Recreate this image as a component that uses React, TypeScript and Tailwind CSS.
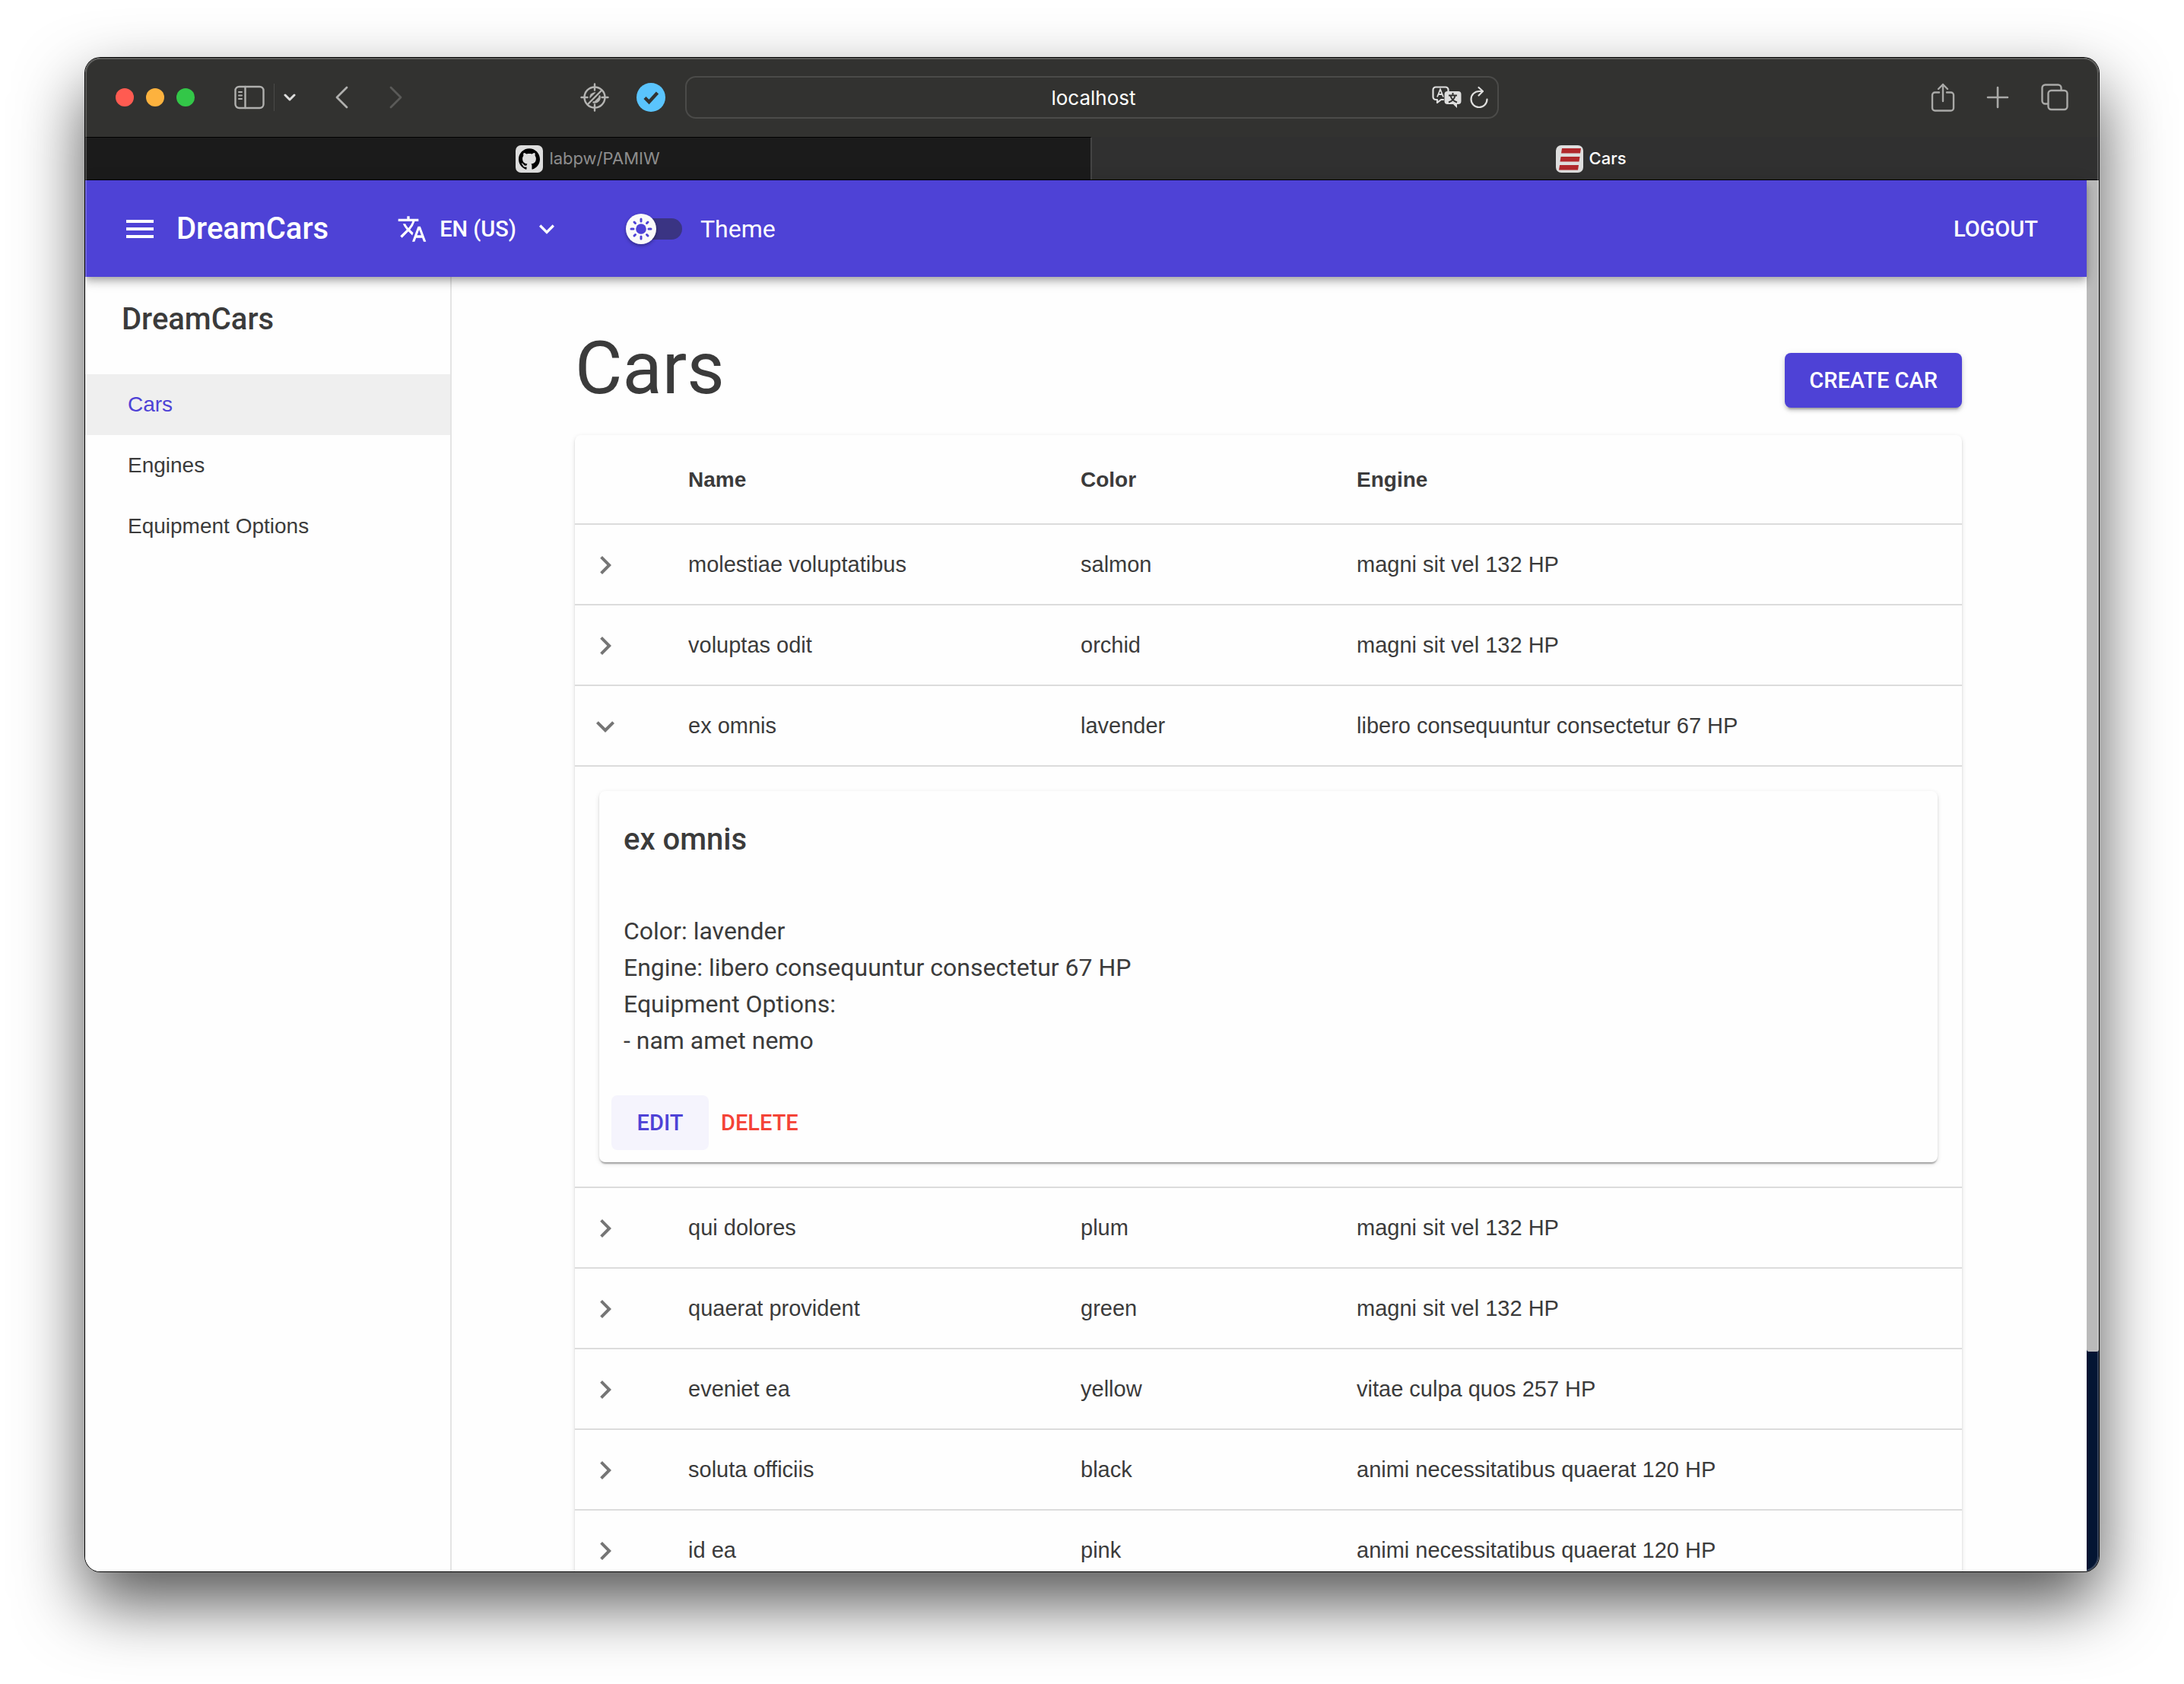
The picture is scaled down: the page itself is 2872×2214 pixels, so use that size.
import React, { useState } from "react";
import {
  MdChevronRight,
  MdExpandMore,
  MdMenu,
  MdTranslate,
} from "react-icons/md";
import { SiGithub } from "react-icons/si";

type Car = {
  name: string;
  color: string;
  engine: string;
  options: string[];
};

const cars: Car[] = [
  { name: "molestiae voluptatibus", color: "salmon", engine: "magni sit vel 132 HP", options: [] },
  { name: "voluptas odit", color: "orchid", engine: "magni sit vel 132 HP", options: [] },
  { name: "ex omnis", color: "lavender", engine: "libero consequuntur consectetur 67 HP", options: ["nam amet nemo"] },
  { name: "qui dolores", color: "plum", engine: "magni sit vel 132 HP", options: [] },
  { name: "quaerat provident", color: "green", engine: "magni sit vel 132 HP", options: [] },
  { name: "eveniet ea", color: "yellow", engine: "vitae culpa quos 257 HP", options: [] },
  { name: "soluta officiis", color: "black", engine: "animi necessitatibus quaerat 120 HP", options: [] },
  { name: "id ea", color: "pink", engine: "animi necessitatibus quaerat 120 HP", options: [] },
];

function SidebarIcon() {
  return (
    <svg width="40" height="32" viewBox="0 0 40 32" fill="none" stroke="#b0b0ae" strokeWidth="2.4" strokeLinecap="round">
      <rect x="1.5" y="2" width="37" height="28" rx="5" />
      <path d="M14.5 2v28" />
      <path d="M6 9h4M6 13.5h4M6 18h4" strokeWidth="2" />
    </svg>
  );
}

function CrosshairIcon() {
  return (
    <svg width="38" height="38" viewBox="0 0 38 38" fill="none" stroke="#b4b4b2" strokeWidth="2.4" strokeLinecap="round">
      <circle cx="19" cy="19" r="13.5" />
      <path d="M19 1.5v8M19 28.5v8M1.5 19h8M28.5 19h8" />
      <path d="M10 28L28 10" />
      <path d="M12.5 20.5a6.8 6.8 0 0 1 8-8z" fill="#b4b4b2" stroke="none" />
      <path d="M17.5 25.5L25.5 17.5a6.8 6.8 0 0 1-8 8z" fill="#b4b4b2" stroke="none" />
      <path d="M17.5 25.5a6.8 6.8 0 0 0 8-8" />
    </svg>
  );
}

function CheckBadgeIcon() {
  return (
    <svg width="38" height="38" viewBox="0 0 38 38" fill="none">
      <circle cx="19" cy="19" r="19" fill="#5ac4fd" />
      <path d="M11 19.5l5.5 5.5L27.5 13" stroke="#323230" strokeWidth="4.4" />
    </svg>
  );
}

function PageTranslateIcon() {
  return (
    <svg width="40" height="30" viewBox="0 0 40 30" fill="none">
      <path
        d="M15 18h-3l-5 4v-4H5a3.5 3.5 0 0 1-3.5-3.5V5A3.5 3.5 0 0 1 5 1.5h13A3.5 3.5 0 0 1 21.5 5v2"
        stroke="#dededd"
        strokeWidth="2.2"
        strokeLinejoin="round"
        strokeLinecap="round"
      />
      <path d="M7 14.5L11 4.5l4 10M8.5 11h5" stroke="#dededd" strokeWidth="1.8" />
      <path d="M20.5 7H34.5a4 4 0 0 1 4 4v9a4 4 0 0 1-4 4H33v5l-5-5h-7.5a4 4 0 0 1-4-4v-9a4 4 0 0 1 4-4z" fill="#dededd" />
      <path
        d="M27.5 9v3M22 12.5h11M24.5 13c1 4 4 7 8.5 8.5M30.5 13c-1 4-4 7-8.5 8.5"
        stroke="#323230"
        strokeWidth="1.9"
      />
    </svg>
  );
}

function ReloadIcon() {
  return (
    <svg width="24" height="30" viewBox="0 0 24 30" fill="none" stroke="#dededd" strokeWidth="2.2" strokeLinecap="round" strokeLinejoin="round">
      <path d="M22.5 17.5A10.5 10.5 0 1 1 12 7h4.5" />
      <path d="M11.5 2l5.5 5-5.5 5.5" />
    </svg>
  );
}

function ShareIcon() {
  return (
    <svg width="32" height="38" viewBox="0 0 32 38" fill="none" stroke="#a9a9a7" strokeWidth="2.4" strokeLinecap="round" strokeLinejoin="round">
      <path d="M11 12.5H5.5A3.5 3.5 0 0 0 2 16v17a3.5 3.5 0 0 0 3.5 3.5h21A3.5 3.5 0 0 0 30 33V16a3.5 3.5 0 0 0-3.5-3.5H21" />
      <path d="M16 24V2M10 8l6-6 6 6" />
    </svg>
  );
}

function TabsIcon() {
  return (
    <svg width="36" height="36" viewBox="0 0 36 36" fill="none" stroke="#a9a9a7" strokeWidth="2.4" strokeLinejoin="round">
      <rect x="9.5" y="9" width="25" height="25" rx="4" />
      <path d="M9.5 26.5H5.5a4 4 0 0 1-4-4v-17a4 4 0 0 1 4-4h17a4 4 0 0 1 4 4V9" />
    </svg>
  );
}

function CarsFavicon() {
  return (
    <svg width="36" height="36" viewBox="0 0 36 36">
      <rect width="36" height="36" rx="7" fill="#dedede" />
      <g fill="#b0282c">
        <path d="M8 4h25l-1 6.5H7z" />
        <path d="M6.5 15h25l-1 6.5h-25z" />
        <path d="M5 26h25l-1 6.5H4z" />
      </g>
    </svg>
  );
}

function Sun() {
  return (
    <svg width="40" height="40" viewBox="0 0 40 40" fill="#4e42d6">
      <circle cx="20" cy="20" r="6.8" />
      <g stroke="#4e42d6" strokeWidth="3" strokeLinecap="round">
        <path d="M20 7v3M20 30v3M7 20h3M30 20h3M11 11l1.5 1.5M27.5 27.5L29 29M29 11l-1.5 1.5M12.5 27.5L11 29" />
      </g>
    </svg>
  );
}

function Toolbar() {
  return (
    <div className="flex h-[104px] shrink-0 items-center bg-[#323230]">
      <div className="flex flex-1 items-center pl-10">
        <div className="flex gap-4">
          <span className="size-6 rounded-full bg-[#ff5b51]" />
          <span className="size-6 rounded-full bg-[#fdb23e]" />
          <span className="size-6 rounded-full bg-[#33c748]" />
        </div>
        <div className="ml-[52px] flex items-center">
          <button aria-label="Sidebar">
            <SidebarIcon />
          </button>
          <span className="ml-3 h-9 w-px bg-[#4a4a48]" />
          <button aria-label="Tab groups" className="ml-3">
            <svg width="16" height="10" viewBox="0 0 16 10" fill="none" stroke="#dededd" strokeWidth="3" strokeLinecap="round" strokeLinejoin="round">
              <path d="M2 2l6 6 6-6" />
            </svg>
          </button>
          <button aria-label="Back" className="ml-[51px]">
            <svg width="18" height="30" viewBox="0 0 18 30" fill="none" stroke="#b0b0ae" strokeWidth="2.8" strokeLinecap="round" strokeLinejoin="round">
              <path d="M16 2L3 15l13 13" />
            </svg>
          </button>
          <button aria-label="Forward" className="ml-[54px]">
            <svg width="18" height="30" viewBox="0 0 18 30" fill="none" stroke="#5a5a58" strokeWidth="2.8" strokeLinecap="round" strokeLinejoin="round">
              <path d="M2 2l13 13L2 28" />
            </svg>
          </button>
        </div>
        <div className="ml-auto flex items-center gap-9 pr-[26px]">
          <button aria-label="Tracker blocker">
            <CrosshairIcon />
          </button>
          <button aria-label="Checker">
            <CheckBadgeIcon />
          </button>
        </div>
      </div>
      <div className="flex h-14 w-[1070px] items-center rounded-[14px] border-2 border-[#4b4b49] pr-3">
        <input
          aria-label="Address"
          defaultValue="localhost"
          className="ml-[90px] min-w-0 flex-1 bg-transparent text-center font-['Inter'] text-[26px] text-white outline-none"
        />
        <button aria-label="Translate page">
          <PageTranslateIcon />
        </button>
        <button aria-label="Reload" className="ml-2.5">
          <ReloadIcon />
        </button>
      </div>
      <div className="flex flex-1 items-center justify-end pr-10">
        <button aria-label="Share">
          <ShareIcon />
        </button>
        <button aria-label="New tab" className="ml-[41px]">
          <svg width="30" height="30" viewBox="0 0 30 30" stroke="#a9a9a7" strokeWidth="2.6" strokeLinecap="round">
            <path d="M15 2v26M2 15h26" />
          </svg>
        </button>
        <button aria-label="Tab overview" className="ml-[42px]">
          <TabsIcon />
        </button>
      </div>
    </div>
  );
}

function TabBar() {
  return (
    <div className="flex h-[57px] shrink-0 border-b border-black bg-[#303030] font-['Inter'] text-[22px]">
      <button className="flex w-1/2 items-center justify-center gap-2 border-t border-r-2 border-t-black border-r-[#444] bg-[#1b1b1b] text-[#8d8d8d]">
        <span className="flex size-9 items-center justify-center rounded-[7px] bg-[#dedede]">
          <SiGithub size={28} color="#000" />
        </span>
        labpw/PAMIW
      </button>
      <button className="flex w-1/2 items-center justify-center gap-2 border-t border-transparent pr-3 font-medium text-white">
        <CarsFavicon />
        Cars
      </button>
    </div>
  );
}

function AppBar() {
  return (
    <header className="z-10 flex h-[127px] shrink-0 items-center bg-[#4e42d6] pr-16 pl-12 text-white shadow-[0_4px_8px_-2px_rgba(0,0,0,0.2),0_8px_10px_rgba(0,0,0,0.14),0_2px_20px_rgba(0,0,0,0.12)]">
      <button aria-label="Menu">
        <MdMenu size={48} />
      </button>
      <span className="ml-6 text-[40px] leading-[64px] font-medium">DreamCars</span>
      <button className="ml-[90px] flex items-center text-[29px] leading-[48px] font-medium">
        <MdTranslate size={40} />
        <span className="ml-4">EN (US)</span>
        <MdExpandMore size={40} className="ml-5" />
      </button>
      <label className="ml-[84px] flex items-center text-[32px] leading-[48px]">
        <input type="checkbox" className="sr-only" />
        <span className="flex h-10 w-[74px] items-center">
          <span className="z-10 size-10 shrink-0 rounded-full bg-[#fafafa] shadow-[0_2px_4px_rgba(0,0,0,0.35)]">
            <Sun />
          </span>
          <span className="-ml-5 h-7 flex-1 rounded-r-full bg-[#3a3483]" />
        </span>
        <span className="ml-6">Theme</span>
      </label>
      <button className="ml-auto text-[29px] leading-[48px] font-medium">LOGOUT</button>
    </header>
  );
}

function SideNav() {
  return (
    <nav className="w-[482px] shrink-0 border-r-2 border-[#e4e4e4] bg-[#fefefe]">
      <p className="flex h-32 px-12 pt-6 text-[40px] leading-[64px] font-medium">DreamCars</p>
      <ul className="font-['Liberation_Sans'] text-[28px] leading-[80px]">
        <li>
          <a href="#cars" className="block bg-[#efefef] px-14 text-[#4e42d6]">
            Cars
          </a>
        </li>
        <li>
          <a href="#engines" className="block px-14">
            Engines
          </a>
        </li>
        <li>
          <a href="#equipment" className="block px-14">
            Equipment Options
          </a>
        </li>
      </ul>
    </nav>
  );
}

function CarCard({ car }: { car: Car }) {
  return (
    <article className="rounded-lg bg-[#fefefe] p-4 font-['Roboto'] shadow-[0_4px_2px_-2px_rgba(0,0,0,0.2),0_2px_2px_rgba(0,0,0,0.14),0_2px_6px_rgba(0,0,0,0.12)]">
      <div className="px-4 pt-4 pb-8">
        <h2 className="text-[40px] leading-[64px] font-medium">{car.name}</h2>
        <div className="mt-16 text-[32px] leading-[48px]">
          <p>Color: {car.color}</p>
          <p>Engine: {car.engine}</p>
          <p>Equipment Options:</p>
          {car.options.map((option) => (
            <p key={option}>- {option}</p>
          ))}
        </div>
      </div>
      <div className="mt-4 flex text-[29px] leading-[72px] font-medium">
        <button className="w-32 rounded-lg bg-[#f5f4fd] text-[#4e42d6]">EDIT</button>
        <button className="rounded-lg px-4 text-[#f44336]">DELETE</button>
      </div>
    </article>
  );
}

function CarsTable() {
  const [open, setOpen] = useState("ex omnis");
  return (
    <div className="rounded-lg bg-[#fefefe] shadow-[0_4px_2px_-2px_rgba(0,0,0,0.2),0_2px_2px_rgba(0,0,0,0.14),0_2px_6px_rgba(0,0,0,0.12)]">
      <table className="w-full table-fixed border-separate border-spacing-0 text-left font-['Liberation_Sans'] text-[29px] leading-10">
        <thead>
          <tr className="h-[118px] text-[28px]">
            <th aria-label="Details" className="w-[117px] border-b-2 border-[#dcdcdc]" />
            <th className="w-[516px] border-b-2 border-[#dcdcdc] px-8 pt-0.5">Name</th>
            <th className="w-[363px] border-b-2 border-[#dcdcdc] px-8 pt-0.5">Color</th>
            <th className="border-b-2 border-[#dcdcdc] px-8 pt-0.5">Engine</th>
          </tr>
        </thead>
        <tbody>
          {cars.map((car) => (
            <React.Fragment key={car.name}>
              <tr className="h-[106px]">
                <td className="border-b-2 border-[#dcdcdc] pt-0.5 pl-4">
                  <button
                    aria-label={"Toggle " + car.name}
                    className="block text-[#757575]"
                    onClick={() => setOpen(open === car.name ? "" : car.name)}
                  >
                    {open === car.name ? <MdExpandMore size={48} /> : <MdChevronRight size={48} />}
                  </button>
                </td>
                <td className="border-b-2 border-[#dcdcdc] px-8">{car.name}</td>
                <td className="border-b-2 border-[#dcdcdc] px-8">{car.color}</td>
                <td className="border-b-2 border-[#dcdcdc] px-8">{car.engine}</td>
              </tr>
              {open === car.name && (
                <tr>
                  <td colSpan={4} className="border-b-2 border-[#dcdcdc] p-8">
                    <CarCard car={car} />
                  </td>
                </tr>
              )}
            </React.Fragment>
          ))}
        </tbody>
      </table>
    </div>
  );
}

export default function App() {
  return (
    <div className="h-screen bg-white px-28 pt-[76px] pb-[148px] font-['Roboto',sans-serif] text-[#3b3b3b]">
      <div className="relative flex h-full flex-col overflow-hidden rounded-[20px] bg-[#fefefe] shadow-[0_0_0_1px_#000,0_40px_88px_rgba(0,0,0,0.68)]">
        <Toolbar />
        <TabBar />
        <div className="flex min-h-0 flex-1">
          <div className="flex min-w-0 flex-1 flex-col">
            <AppBar />
            <div className="flex min-h-0 flex-1">
              <SideNav />
              <main className="min-w-0 flex-1 overflow-hidden pt-16 pr-[164px] pl-[162px]">
                <div className="mb-8 flex items-end justify-between">
                  <h1 className="text-[96px] leading-[112px]">Cars</h1>
                  <button className="mb-1 rounded-lg bg-[#4e42d6] px-8 text-[29px] leading-[72px] font-medium text-white shadow-[0_6px_2px_-4px_rgba(0,0,0,0.2),0_4px_4px_rgba(0,0,0,0.14),0_2px_10px_rgba(0,0,0,0.12)]">
                    CREATE CAR
                  </button>
                </div>
                <CarsTable />
              </main>
            </div>
          </div>
          <div className="flex w-4 shrink-0 flex-col bg-[#041533]">
            <div className="h-[84.2%] rounded-b-[3px] bg-[#bababa]" />
          </div>
        </div>
        <div className="pointer-events-none absolute inset-0 z-20 rounded-[20px] border-2 border-white/20" />
      </div>
    </div>
  );
}
